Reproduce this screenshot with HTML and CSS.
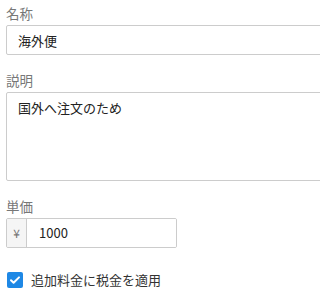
FILE: index.html
```html
<!DOCTYPE html>
<html lang="ja">
<head>
<meta charset="utf-8">
<link rel="stylesheet" href="styles.css">
</head>
<body>
<form class="form">
  <div class="field">
    <label class="label" for="name">名称</label>
    <input class="control" id="name" type="text" value="海外便">
  </div>
  <div class="field">
    <label class="label" for="desc">説明</label>
    <textarea class="control area" id="desc">国外へ注文のため</textarea>
  </div>
  <div class="field">
    <label class="label" for="price">単価</label>
    <div class="group">
      <span class="prefix">¥</span>
      <input class="num" id="price" type="text" value="1000">
    </div>
  </div>
  <label class="check">
    <span class="box"><svg width="16" height="16" viewBox="0 0 16 16"><path d="M4 8.2l2.6 2.6L12 5.4" fill="none" stroke="#fff" stroke-width="2" stroke-linecap="round" stroke-linejoin="round"/></svg></span>
    <span class="check-text">追加料金に税金を適用</span>
  </label>
</form>
</body>
</html>
```

FILE: styles.css
```css
html, body {
  margin: 0;
  padding: 0;
  overflow: hidden;
  background: #fff;
}
body {
  font-family: "Noto Sans CJK JP", "Noto Sans", sans-serif;
  font-size: 13px;
  color: #222;
}
.form {
  display: flex;
  flex-direction: column;
  padding: 4px 0 0 6px;
}
.field {
  display: flex;
  flex-direction: column;
  margin-bottom: 16px;
}
.label {
  display: block;
  font-size: 13.5px;
  line-height: 18px;
  color: #777;
  margin-bottom: 3px;
}
.control {
  box-sizing: border-box;
  width: 100vw;
  height: 30px;
  margin: 0;
  padding: 0 11px;
  border: 1px solid #ccc;
  border-radius: 2px;
  font-family: inherit;
  font-size: 13px;
  line-height: 28px;
  color: #222;
  background: #fff;
  outline: none;
}
.area {
  height: 89px;
  padding: 6px 11px;
  line-height: 18px;
  resize: none;
  overflow: hidden;
}
.group {
  display: flex;
  box-sizing: border-box;
  width: 171px;
  height: 30px;
  border: 1px solid #ccc;
  border-radius: 2px;
  overflow: hidden;
}
.prefix {
  width: 20px;
  box-sizing: border-box;
  border-right: 1px solid #ccc;
  background: #f5f5f5;
  color: #777;
  font-size: 12px;
  line-height: 28px;
  text-align: center;
}
.num {
  flex: 1;
  min-width: 0;
  border: 0;
  margin: 0;
  padding: 0 0 0 12px;
  font-family: inherit;
  font-size: 13px;
  line-height: 28px;
  color: #222;
  outline: none;
  background: #fff;
}
.check {
  display: flex;
  align-items: center;
  gap: 8px;
  margin-top: 7px;
  padding-left: 1px;
}
.box {
  width: 16px;
  height: 16px;
  border-radius: 2px;
  background: #1e88e5;
  display: flex;
}
.check-text {
  font-size: 13px;
  line-height: 18px;
  color: #333;
}
```
